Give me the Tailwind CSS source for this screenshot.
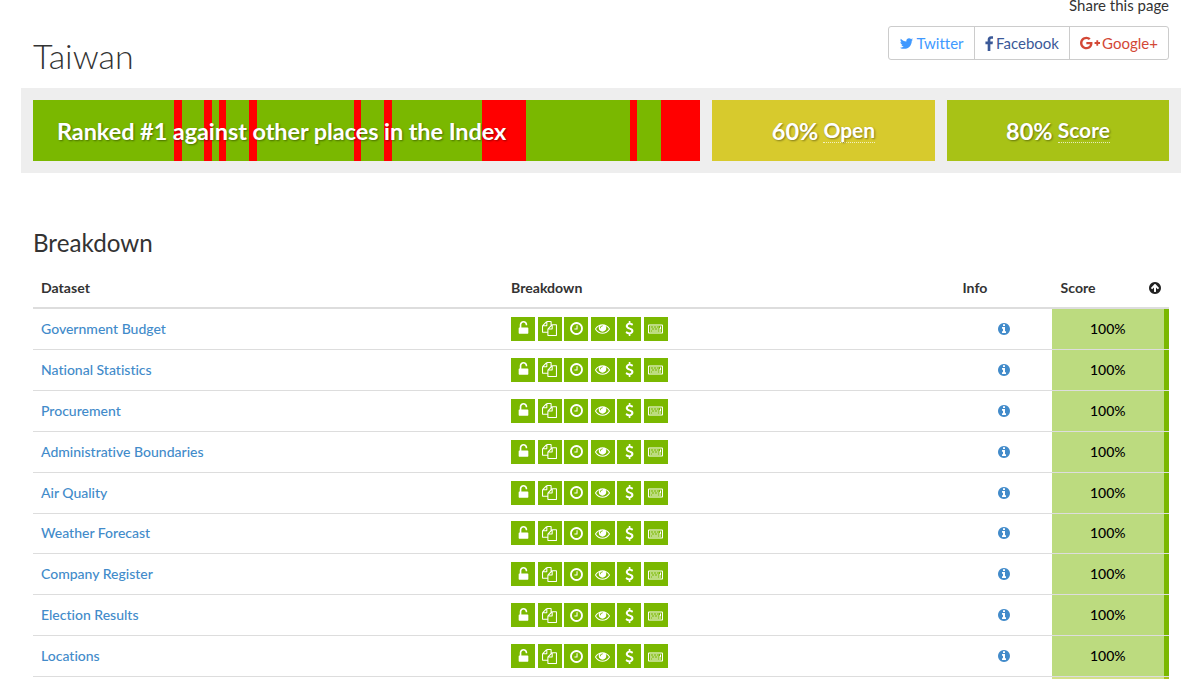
<!DOCTYPE html>
<html lang="en">
<head>
    <meta charset="UTF-8">
    <title>Taiwan - Open Data Index</title>
    <meta name="viewport" content="width=device-width, initial-scale=1.0">
    <script src="https://cdn.jsdelivr.net/npm/@tailwindcss/browser@4"></script>
</head>
<body class="h-screen overflow-hidden bg-white font-['Lato',sans-serif] text-[15px] leading-5 text-[#333] [font-variant-ligatures:none]">

<!-- Icons -->
<svg class="hidden">
    <symbol id="unlock" viewBox="0 0 1792 1792"><path d="M1376 768q40 0 68 28t28 68v576q0 40-28 68t-68 28h-960q-40 0-68-28t-28-68v-576q0-40 28-68t68-28h32v-320q0-185 131.500-316.500t316.500-131.500 316.500 131.500 131.500 316.500q0 26-19 45t-45 19h-64q-26 0-45-19t-19-45q0-106-75-181t-181-75-181 75-75 181v320h736z"/></symbol>
    <symbol id="copy" viewBox="0 0 1792 1792"><path d="M1696 384q40 0 68 28t28 68v1216q0 40-28 68t-68 28h-960q-40 0-68-28t-28-68v-288h-544q-40 0-68-28t-28-68v-672q0-40 20-88t48-76l408-408q28-28 76-48t88-20h416q40 0 68 28t28 68v328q68-40 128-40h416zm-544 213l-299 299h299v-299zm-640-384l-299 299h299v-299zm196 647l316-316v-416h-384v416q0 40-28 68t-68 28h-416v640h512v-256q0-40 20-88t48-76zm956 804v-1152h-384v416q0 40-28 68t-68 28h-416v640h896z"/></symbol>
    <symbol id="clock" viewBox="0 0 1792 1792"><path d="M1024 544v448q0 14-9 23t-23 9h-320q-14 0-23-9t-9-23v-64q0-14 9-23t23-9h224v-352q0-14 9-23t23-9h64q14 0 23 9t9 23zm416 352q0-148-73-273t-198-198-273-73-273 73-198 198-73 273 73 273 198 198 273 73 273-73 198-198 73-273zm224 0q0 209-103 385.500t-279.500 279.500-385.500 103-385.500-103-279.500-279.500-103-385.500 103-385.500 279.500-279.500 385.500-103 385.500 103 279.500 279.500 103 385.500z"/></symbol>
    <symbol id="eye" viewBox="0 0 1792 1792"><path d="M1664 960q-152-236-381-353 61 104 61 225 0 185-131.500 316.500t-316.500 131.500-316.500-131.500-131.500-316.500q0-121 61-225-229 117-381 353 133 205 333.500 326.500t434.500 121.500 434.500-121.500 333.500-326.500zm-720-384q0-20-14-34t-34-14q-125 0-214.500 89.500t-89.500 214.500q0 20 14 34t34 14 34-14 14-34q0-86 61-147t147-61q20 0 34-14t14-34zm848 384q0 34-20 69-140 230-376.500 368.500t-499.500 138.500-499.500-139-376.500-368q-20-35-20-69t20-69q140-229 376.500-368t499.500-139 499.500 139 376.500 368q20 35 20 69z"/></symbol>
    <symbol id="dollar" viewBox="0 0 1792 1792"><path d="M1362 1185q0 153-99.500 263.500t-258.500 136.500v175q0 14-9 23t-23 9h-135q-13 0-22.500-9.500t-9.500-22.500v-175q-66-9-127.500-31t-101.500-44.500-74-48-46.500-37.500-17.500-18q-17-21-2-41l103-135q7-10 23-12 15-2 24 9l2 2q113 99 243 125 37 8 74 8 81 0 142.500-43t61.500-122q0-28-15-53t-33.500-42-58.500-37.500-66-32-80-32.500q-39-16-61.500-25t-61.500-26.500-62.500-31-56.500-35.500-53.500-42.500-43.500-49-35.500-58-21-66.500-8.500-78q0-138 98-242t255-134v-180q0-13 9.500-22.500t22.500-9.500h135q14 0 23 9t9 23v176q57 6 110.500 23t87 33.500 63.500 37.500 39 29 15 14q17 18 5 38l-81 146q-8 15-23 16-14 3-27-7-3-3-14.500-12t-39-26.500-58.500-32-74.500-26-85.500-11.500q-95 0-155 43t-60 111q0 26 8.500 48t29.500 41.500 39.500 33 56 31 60.500 27 70 27.500q53 20 81 31.500t76 35 75.500 42.500 62 50 53 63.500 31.500 76.500 13 94z"/></symbol>
    <symbol id="keyboard" viewBox="0 0 1920 1792">
        <path fill-rule="evenodd" d="M128 384h1664q53 0 90.500 37.500t37.500 90.500v896q0 53-37.500 90.500t-90.500 37.500h-1664q-53 0-90.500-37.500t-37.500-90.500v-896q0-53 37.500-90.500t90.500-37.500zM128 512v896h1664v-896z"/>
        <path d="M256 1152h128v128h-128zM448 1152h896v128h-896zM1408 1152h256v128h-256zM256 896h256v128h-256zM576 896h128v128h-128zM768 896h128v128h-128zM960 896h128v128h-128zM1152 896h128v128h-128zM1344 896h192v-256h128v384h-320zM256 640h128v128h-128zM448 640h128v128h-128zM640 640h128v128h-128zM832 640h128v128h-128zM1024 640h128v128h-128zM1216 640h128v128h-128z"/>
    </symbol>
    <symbol id="info" viewBox="0 0 1792 1792"><path d="M1152 1376v-160q0-14-9-23t-23-9h-96v-512q0-14-9-23t-23-9h-320q-14 0-23 9t-9 23v160q0 14 9 23t23 9h96v320h-96q-14 0-23 9t-9 23v160q0 14 9 23t23 9h448q14 0 23-9t9-23zm-128-896v-160q0-14-9-23t-23-9h-192q-14 0-23 9t-9 23v160q0 14 9 23t23 9h192q14 0 23-9t9-23zm640 416q0 209-103 385.500t-279.500 279.500-385.500 103-385.500-103-279.500-279.500-103-385.500 103-385.500 279.500-279.500 385.500-103 385.500 103 279.500 279.500 103 385.500z"/></symbol>
    <symbol id="arrow-up" viewBox="0 0 1792 1792"><path d="M1412 895q0-27-18-45l-362-362-91-91q-18-18-45-18t-45 18l-91 91-362 362q-18 18-18 45t18 45l91 91q18 18 45 18t45-18l189-189v502q0 26 19 45t45 19h128q26 0 45-19t19-45v-502l189 189q19 19 45 19t45-19l91-91q18-18 18-45zm252 1q0 209-103 385.500t-279.500 279.500-385.500 103-385.500-103-279.500-279.500-103-385.500 103-385.500 279.500-279.500 385.500-103 385.500 103 279.500 279.500 103 385.500z"/></symbol>
    <symbol id="twitter" viewBox="0 0 1792 1792"><path d="M1684 408q-67 98-162 167 1 14 1 42 0 130-38 259.500t-115.500 248.500-184.500 210.500-258 146-323 54.500q-271 0-496-145 35 4 78 4 225 0 401-138-105-2-188-64.500t-114-159.500q33 5 61 5 43 0 85-11-112-23-185.500-111.500t-73.500-205.500v-4q68 38 146 41-66-44-105-115t-39-154q0-88 44-163 121 149 294.500 238.500t371.500 99.500q-8-38-8-74 0-134 94.500-228.500t228.500-94.500q140 0 236 102 109-21 205-78-37 115-142 178 93-10 186-50z"/></symbol>
    <symbol id="facebook" viewBox="430 0 1024 1792"><path d="M1343 140v264h-157q-86 0-116 36t-30 108v189h293l-39 296h-254v759h-306v-759h-255v-296h255v-218q0-186 104-288.500t277-102.500q147 0 228 12z"/></symbol>
    <symbol id="google" viewBox="0 0 2304 1792"><path d="M1437 913q0 208-87 370.500t-248 254-369 91.500q-149 0-285-58t-234-156-156-234-58-285 58-285 156-234 234-156 285-58q286 0 491 192l-199 191q-117-113-292-113-123 0-227.500 62t-165.500 168.500-61 232.500 61 232.500 165.500 168.500 227.500 62q83 0 152.500-23t114.500-57.500 78.500-78.500 49-83 21.500-74h-416v-252h692q12 63 12 122zm867-122v210h-209v209h-210v-209h-209v-210h209v-209h210v209h209z"/></symbol>
</svg>

<!-- Header -->
<header class="flex h-[88px] items-start justify-between pl-[33px] pr-[31px]">
    <h1 class="mt-[36px] text-[34px] leading-10 font-light">Taiwan</h1>
    <div class="flex flex-col items-end">
        <p class="-mt-[3px] h-[18px] leading-[17px]">Share this page</p>
        <div class="mt-[11px] flex h-[34px] w-[281px] rounded-[3px] border border-[#ccc] text-[15px]">
            <a class="flex w-[86px] items-center justify-center gap-[2px] border-r border-[#ccc] text-[#4099ff]"><svg class="size-[15px] fill-current"><use href="#twitter"/></svg>Twitter</a>
            <a class="flex w-[95px] items-center justify-center gap-[2px] border-r border-[#ccc] text-[#3b5998]"><svg class="h-4 w-[9px] fill-current"><use href="#facebook"/></svg>Facebook</a>
            <a class="flex flex-1 items-center justify-center gap-[2px] text-[#d34836]"><svg class="h-4 w-5 fill-current"><use href="#google"/></svg>Google+</a>
        </div>
    </div>
</header>

<!-- Summary -->
<section class="ml-[21px] flex h-[85px] w-[1160px] gap-3 bg-[#eee] px-3 pt-[11.500px] pb-3 text-[23.500px] font-bold text-white [text-shadow:1px_1px_2px_rgba(0,0,0,0.4)]">
    <div class="relative flex w-[667px] items-center pl-6">
        <div id="stripes" class="absolute inset-0 flex"></div>
        <span class="relative top-px tracking-[-0.080px]">Ranked #1 against other places in the Index</span>
    </div>
    <div class="flex w-[223px] items-center justify-center gap-[5px] bg-[#d7ca2d] pt-px">
        <span>60%</span><span class="border-b border-dotted border-white/70 text-[21px] leading-6">Open</span>
    </div>
    <div class="flex w-[222px] items-center justify-center gap-[5px] bg-[#a8c216] pt-px">
        <span>80%</span><span class="border-b border-dotted border-white/70 text-[21px] leading-6">Score</span>
    </div>
</section>

<!-- Breakdown -->
<main class="ml-[33px] w-[1136px]">
    <h2 class="pt-[54px] text-[24.200px] leading-8">Breakdown</h2>
    <div class="mt-[9px] grid h-[41px] grid-cols-[470px_451.500px_98px_1fr] items-center border-b-2 border-[#ddd] text-[14.100px] font-bold">
        <span class="pl-2">Dataset</span>
        <span class="pl-2">Breakdown</span>
        <span class="pl-2">Info</span>
        <span class="flex items-center justify-between pl-2 pr-[7px]">Score<svg class="size-[14px] fill-[#222]"><use href="#arrow-up"/></svg></span>
    </div>
    <div id="rows"></div>
</main>

<script>
    // width of every band in the ranking bar, green and red in turn
    const bands = [141, 8, 22, 8, 7, 7, 23, 8, 97, 7, 23, 8, 89.5, 44.5, 104, 7, 24, 39];
    document.getElementById("stripes").innerHTML = bands.map((w, i) =>
        `<div class="${i % 2 ? "bg-[#f00]" : "bg-[#7ab800]"}" style="width:${w}px"></div>`
    ).join("");

    const datasets = [
        "Government Budget", "National Statistics", "Procurement", "Administrative Boundaries", "Air Quality",
        "Weather Forecast", "Company Register", "Election Results", "Locations"
    ];
    const icons = ["unlock", "copy", "clock", "eye", "dollar", "keyboard"];

    const cells = icons.map(name => `
        <span class="flex size-6 items-center justify-center bg-[#7ab800]">
            <svg class="h-[15px] w-[15px] fill-white"><use href="#${name}"/></svg>
        </span>`).join("");

    document.getElementById("rows").innerHTML = datasets.map(name => `
        <div class="grid h-[40.920px] grid-cols-[470px_451.500px_98px_1fr] items-center border-b border-[#ddd] text-sm font-medium">
            <a class="pl-2 text-[#428bca]">${name}</a>
            <div class="flex gap-[2.600px] pl-2">${cells}</div>
            <div class="flex justify-center"><svg class="size-[14px] fill-[#428bca]"><use href="#info"/></svg></div>
            <div class="-ml-px flex h-full items-center justify-center border-r-[5px] border-[#7ab800] bg-[#bcdb7f] text-black">100%</div>
        </div>`).join("") + `
        <div class="grid h-[2px] grid-cols-[470px_451.500px_98px_1fr]">
            <div class="col-start-4 -ml-px border-r-[5px] border-[#a8c216] bg-[#d3e08a]"></div>
        </div>`;
</script>

</body>
</html>
